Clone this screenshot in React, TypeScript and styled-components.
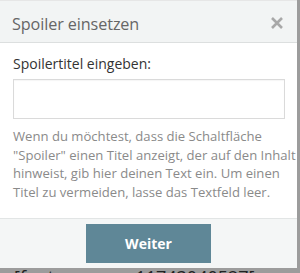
import React from "react";
import styled, { createGlobalStyle } from "styled-components";

const Global = createGlobalStyle`
  html, body { margin: 0; padding: 0; }
  body {
    background: #9c9c9c;
    font-family: "Open Sans", "Liberation Sans", sans-serif;
    overflow: hidden;
  }
`;

const Page = styled.div`
  width: 300px;
  height: 273px;
  overflow: hidden;
`;

const Dialog = styled.div`
  width: 297px;
  background: #fff;
  border-top: 1px solid #e6e6e6;
  box-sizing: border-box;
  display: flex;
  flex-direction: column;
`;

const Header = styled.div`
  height: 41px;
  background: #f2f4f4;
  border-bottom: 1px solid #dcdfdf;
  display: flex;
  align-items: center;
  justify-content: space-between;
  padding: 0 12px 0 12px;
`;

const Title = styled.h1`
  margin: 0;
  font-size: 16.2px;
  font-weight: 400;
  letter-spacing: -0.1px;
  color: #666;
  line-height: 24px;
  padding-top: 4px;
`;

const Close = styled.button`
  border: 0;
  background: none;
  padding: 0;
  width: 16px;
  height: 16px;
  display: flex;
  align-items: center;
  justify-content: center;
  cursor: pointer;
  margin-top: 3px;
`;

const Body = styled.div`
  padding: 11px 12px 16px 13px;
  display: flex;
  flex-direction: column;
`;

const Label = styled.label`
  font-size: 14px;
  line-height: 20px;
  color: #333;
`;

const Input = styled.input`
  margin-top: 5px;
  height: 40px;
  box-sizing: border-box;
  border: 1px solid #dadada;
  box-shadow: inset 0 1px 1px rgba(0,0,0,0.04);
  outline: none;
  font-family: inherit;
  font-size: 14px;
  padding: 0 8px;
  width: 272px;
`;

const Help = styled.p`
  margin: 8px 0 0;
  font-size: 13.1px;
  line-height: 18.7px;
  color: #8a8a8a;
  white-space: nowrap;
`;

const Footer = styled.div`
  border-top: 1px solid #e2e5e5;
  background: #f4f6f6;
  height: 50px;
  box-sizing: border-box;
  display: flex;
  justify-content: center;
  padding-top: 5px;
`;

const Button = styled.button`
  width: 125px;
  height: 39px;
  border: 0;
  background: #5f8797;
  color: #fff;
  font-family: inherit;
  font-weight: 700;
  font-size: 14px;
  cursor: pointer;
`;

const Behind = styled.div`
  margin-top: 0px;
  display: flex;
  gap: 60px;
  padding-left: 14px;
  font-family: "Open Sans", sans-serif;
  font-size: 18px;
  line-height: 18px;
  color: #222;
`;

export default function App() {
  return (
    <Page>
      <Global />
      <Dialog>
        <Header>
          <Title>Spoiler einsetzen</Title>
          <Close aria-label="Schließen">
            <svg width="14" height="14" viewBox="0 0 14 14">
              <path d="M2 2 L12 12 M12 2 L2 12" stroke="#a8a8a8" strokeWidth="2.6" strokeLinecap="butt" />
            </svg>
          </Close>
        </Header>
        <Body>
          <Label>Spoilertitel eingeben:</Label>
          <Input type="text" />
          <Help>
            Wenn du möchtest, dass die Schaltfläche
            <br />
            "Spoiler" einen Titel anzeigt, der auf den Inhalt
            <br />
            hinweist, gib hier deinen Text ein. Um einen
            <br />
            Titel zu vermeiden, lasse das Textfeld leer.
          </Help>
        </Body>
        <Footer>
          <Button>Weiter</Button>
        </Footer>
      </Dialog>
      <Behind>
        <span>[fonten</span>
        <span>11743040527[</span>
      </Behind>
    </Page>
  );
}
